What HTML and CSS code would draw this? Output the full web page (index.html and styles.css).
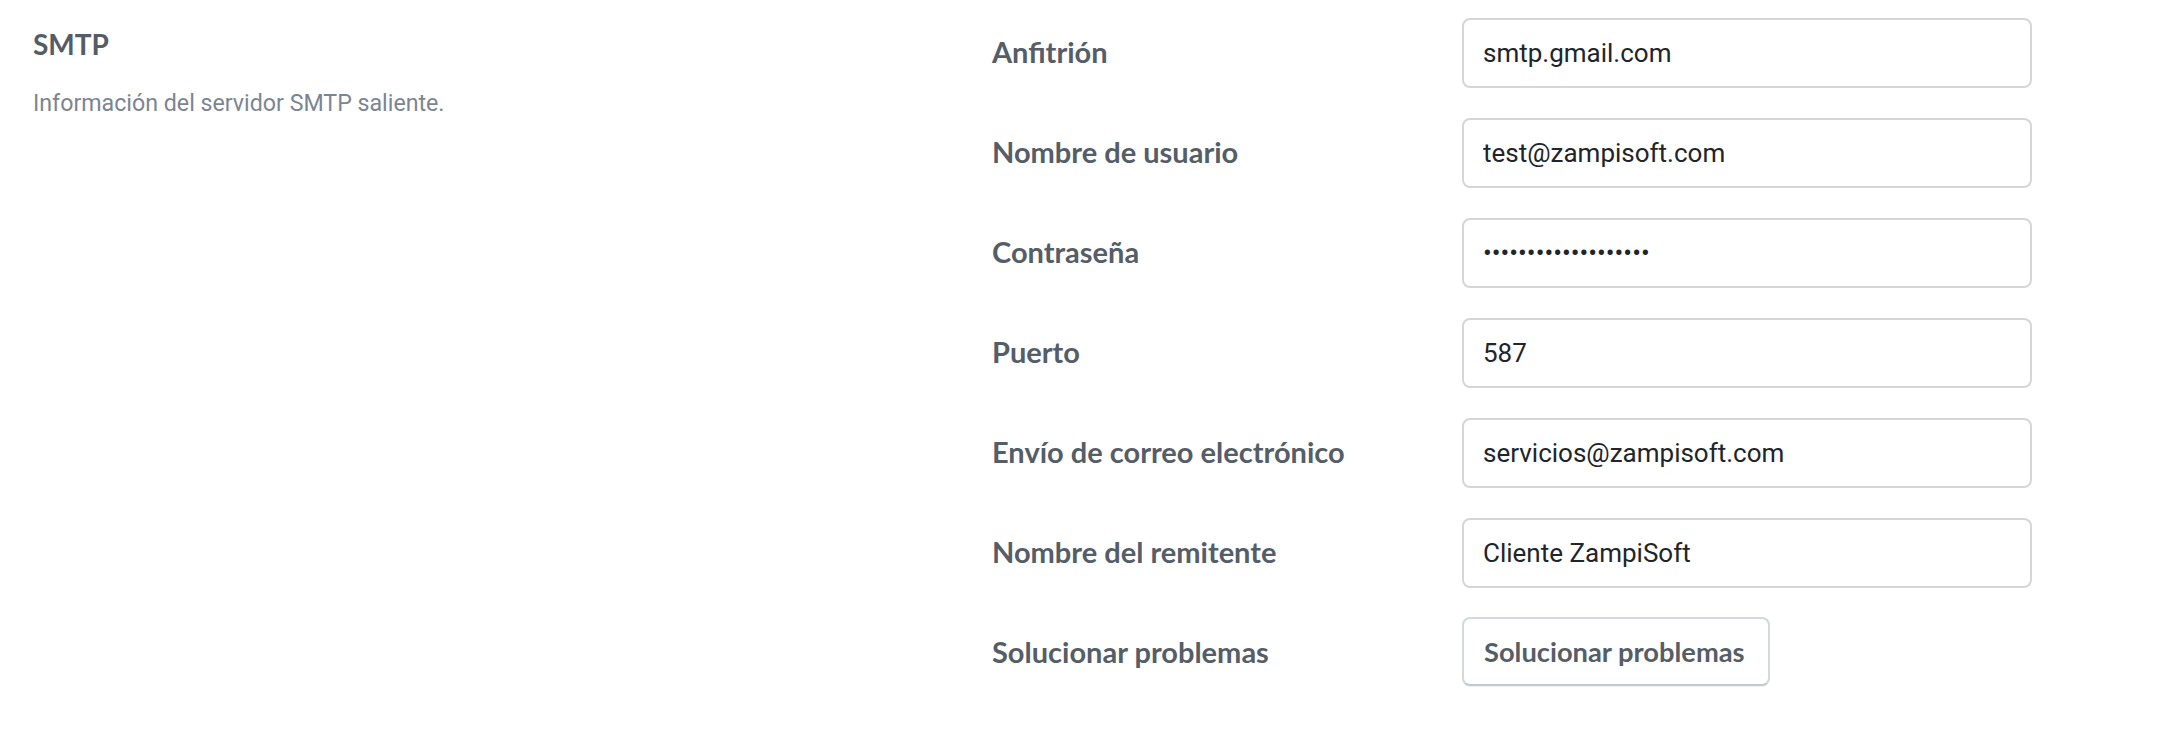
FILE: index.html
```html
<!DOCTYPE html>
<html lang="es">
<head>
<meta charset="utf-8">
<title>SMTP</title>
<link rel="stylesheet" href="styles.css">
</head>
<body>
<div class="page">
  <section class="info">
    <h2 class="info-title">SMTP</h2>
    <p class="info-desc">Información del servidor SMTP saliente.</p>
  </section>
  <form class="form">
    <label class="label" for="host">Anfitrión</label>
    <input class="field" id="host" type="text" value="smtp.gmail.com">

    <label class="label" for="user">Nombre de usuario</label>
    <input class="field" id="user" type="text" value="test@zampisoft.com">

    <label class="label" for="pass">Contraseña</label>
    <input class="field" id="pass" type="password" value="zampisoftpassword12">

    <label class="label" for="port">Puerto</label>
    <input class="field" id="port" type="text" value="587">

    <label class="label" for="from">Envío de correo electrónico</label>
    <input class="field" id="from" type="text" value="servicios@zampisoft.com">

    <label class="label" for="name">Nombre del remitente</label>
    <input class="field" id="name" type="text" value="Cliente ZampiSoft">

    <span class="label">Solucionar problemas</span>
    <div class="btn-cell"><button class="btn" type="button">Solucionar problemas</button></div>
  </form>
</div>
</body>
</html>
```

FILE: styles.css
```css
html, body {
  margin: 0;
  padding: 0;
  background: #ffffff;
}

.page {
  display: flex;
  align-items: flex-start;
  padding: 0 0 0 33px;
}

.info {
  width: 959px;
  flex: none;
}

.info-title {
  margin: 0;
  padding-top: 28px;
  font-family: Lato, "Open Sans", sans-serif;
  font-weight: 700;
  font-size: 28px;
  line-height: 32px;
  color: #545c66;
}

.info-desc {
  margin: 30px 0 0;
  font-family: Roboto, sans-serif;
  font-size: 23.2px;
  line-height: 26px;
  color: #7b8591;
}

.form {
  display: grid;
  grid-template-columns: 470px 570px;
  grid-auto-rows: 70px;
  row-gap: 30px;
  align-items: center;
  padding-top: 18px;
  margin: 0;
}

.label {
  font-family: Lato, "Open Sans", sans-serif;
  font-weight: 700;
  font-size: 29px;
  line-height: 34px;
  padding-bottom: 3px;
  color: #555d67;
}

.field {
  box-sizing: border-box;
  width: 570px;
  height: 70px;
  border: 2px solid #d6d6d6;
  border-radius: 8px;
  padding: 0 19px;
  font-family: Roboto, sans-serif;
  font-size: 26px;
  color: #212529;
  background: #ffffff;
  outline: none;
}

.btn-cell {
  display: flex;
  align-items: center;
}

.btn {
  box-sizing: border-box;
  width: 308px;
  height: 69px;
  margin-top: -4px;
  border: 2px solid #d3d8de;
  border-bottom-color: #c2c8d0;
  border-radius: 8px;
  background: #ffffff;
  font-family: Lato, "Open Sans", sans-serif;
  font-weight: 700;
  font-size: 27.3px;
  color: #555d67;
  padding: 0 0 0 20px;
  text-align: left;
  box-shadow: 0 1px 1px rgba(0, 0, 0, 0.06);
}
```
